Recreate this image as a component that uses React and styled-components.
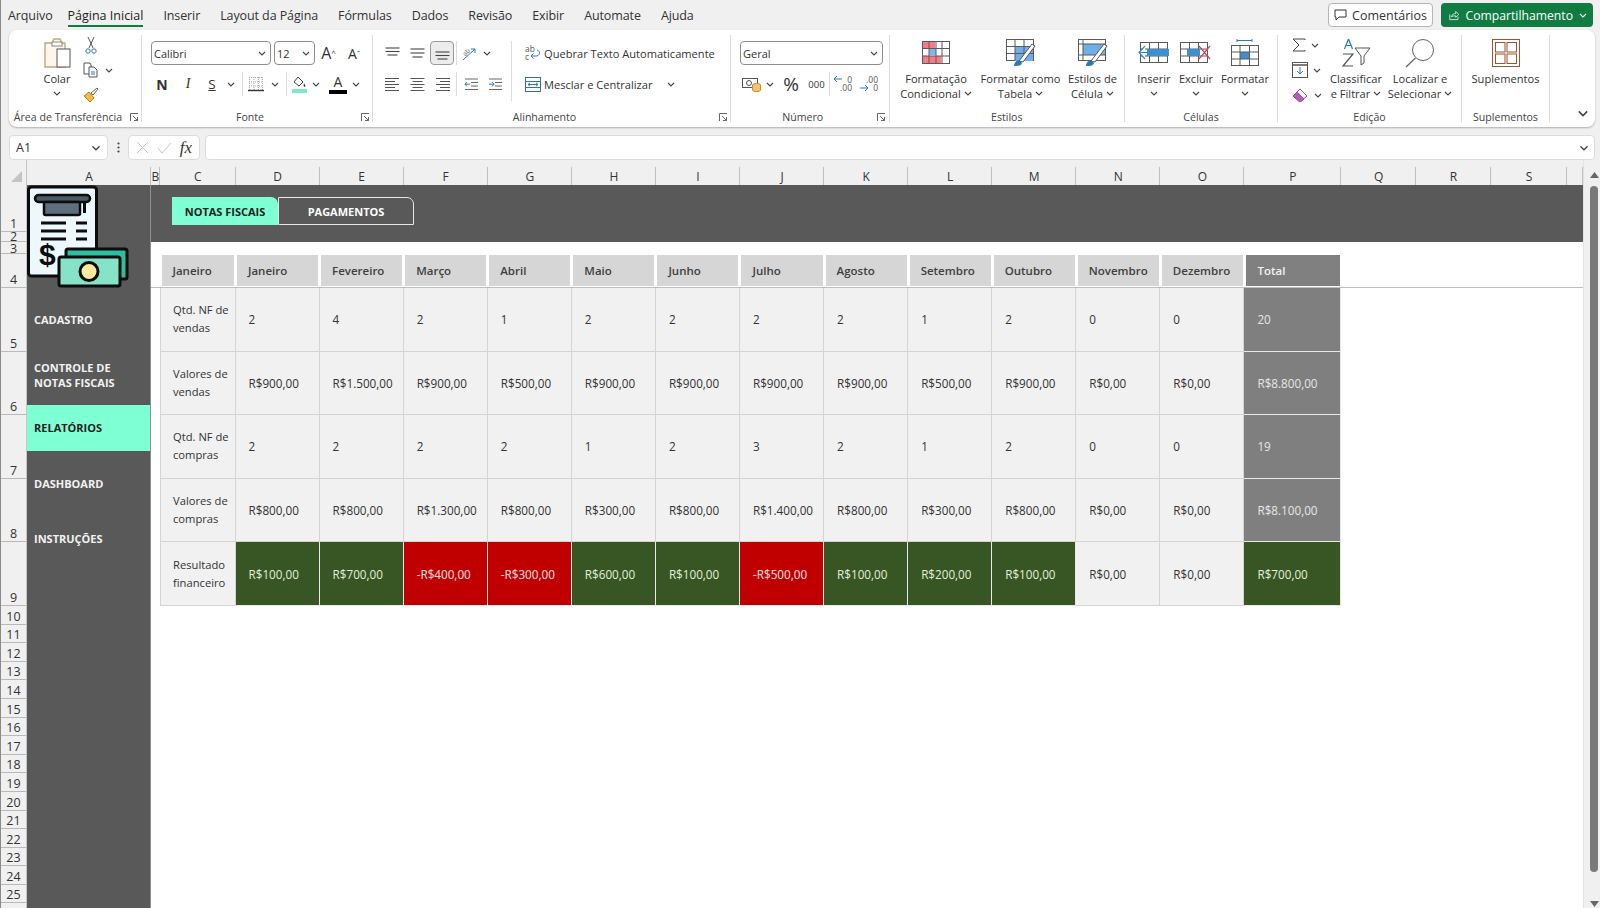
import React from 'react';
import styled, { createGlobalStyle } from 'styled-components';

const Global = createGlobalStyle`
  html, body { margin: 0; padding: 0; height: 100%; overflow: hidden; background: #f0f0f0; }
  body { font-family: "Open Sans", "Liberation Sans", sans-serif; color: #333; }
  * { box-sizing: border-box; }
`;

const Page = styled.div`
  width: 1600px; height: 908px; overflow: hidden; display: flex; flex-direction: column;
  background: #f0f0f0; border-left: 1px solid #8a8a8a;
`;
const TopBar = styled.div`
  height: 30px; display: flex; align-items: center; justify-content: space-between;
  padding: 0 7px 0 7px;
`;
const Menu = styled.nav`display: flex; gap: 20px; align-items: center; height: 30px;`;
const MenuTab = styled.div`
  font-size: 12.5px; letter-spacing: -0.1px; height: 30px; line-height: 31px; position: relative; color: #333;
  ${p => p.$active && `
    color: #222; margin-left: -5px; letter-spacing: 0;
    &::after { content: ""; position: absolute; left: 0; right: 0; bottom: 3px; height: 2px; background: #107c41; }
  `}
`;
const Actions = styled.div`display: flex; gap: 8px; align-items: center;`;
const CommentBtn = styled.button`
  width: 105px; height: 24px; background: #fff; border: 1px solid #b5b5b5; border-radius: 4px; font: inherit;
  font-size: 12.5px; color: #333; display: flex; align-items: center; justify-content: center; gap: 5px; padding: 0;
`;
const ShareBtn = styled.button`
  width: 152px; height: 24px; background: #107c41; border: 0; border-radius: 4px; font: inherit;
  font-size: 12.2px; color: #fff; display: flex; align-items: center; gap: 6px; padding: 0 0 0 8px;
`;
const ShareCaret = styled.span`margin-left: auto; margin-right: 6px; display: flex;`;

const Ribbon = styled.div`
  height: 97px; margin: 0 5px 0 8px; background: #fff; border-radius: 8px;
  box-shadow: 0 1px 2px rgba(0,0,0,.28); display: flex; padding-top: 5px; flex: none;
`;
const Group = styled.section`
  width: ${p => p.$w}px; height: 87px; display: flex; flex-direction: column; flex: none;
  border-right: ${p => (p.$last ? '0' : '1px solid #dcdcdc')};
`;
const GroupBody = styled.div`
  flex: 1; display: flex; padding-left: ${p => p.$pad || 0}px; min-height: 0;
`;
const GroupFoot = styled.div`height: 16px; margin-bottom: -3px; display: flex; align-items: center; flex: none;`;
const GroupLabel = styled.div`flex: 1; text-align: center; font-size: 10.6px; color: #444; white-space: nowrap;`;
const Launcher = styled.span`width: 14px; display: flex; justify-content: center; flex: none;`;

const Stack = styled.div`display: flex; flex-direction: column; gap: 7px; padding-top: 6px; flex: none;`;
const Row = styled.div`display: flex; align-items: center; height: 24px; flex: none;`;
const Tool = styled.span`
  width: ${p => p.$w}px; height: 24px; display: flex; align-items: center; justify-content: center; flex: none;
  color: #333; font-size: ${p => p.$size || 14}px; font-weight: ${p => p.$weight || 400};
  font-style: ${p => p.$italic ? 'italic' : 'normal'};
  text-decoration: ${p => p.$under ? 'underline' : 'none'};
  font-family: ${p => p.$serif ? '"Liberation Serif", serif' : 'inherit'};
  ${p => p.$boxed && 'border: 1px solid #9a9a9a; border-radius: 4px; background: #ececec;'}
`;
const RowSep = styled.span`width: 1px; height: 24px; background: #dcdcdc; margin: 0 ${p => p.$m || 2}px; flex: none;`;
const ColSep = styled.span`width: 1px; height: 60px; margin: 6px 12px 0 ${p => p.$l || 5}px; background: #dcdcdc; flex: none;`;
const Combo = styled.div`
  width: ${p => p.$w}px; height: 24px; border: 1px solid #8e8e8e; border-radius: 4px; background: #fff;
  margin-right: ${p => p.$mr || 0}px; display: flex; align-items: center; justify-content: space-between;
  padding: 0 4px 0 2px; font-size: 11px; color: #333; flex: none;
`;
const TextTool = styled.div`
  display: flex; align-items: center; height: 24px; gap: 3px; font-size: 11.1px; color: #333; white-space: nowrap;
`;
const TextIconSlot = styled.span`width: 17px; display: flex; justify-content: center; flex: none;`;
const CaretGap = styled.span`margin-left: 12px; display: flex;`;

const BigBtn = styled.div`
  width: ${p => p.$w}px; display: flex; flex-direction: column; align-items: center; flex: none;
`;
const BigIcon = styled.div`height: 35.5px; display: flex; align-items: center; justify-content: center; flex: none;`;
const BigText = styled.div`
  font-size: 11.1px; line-height: 15px; color: #333; text-align: center; white-space: nowrap;
  display: flex; align-items: center; justify-content: center; gap: 3px; height: 15px;
`;
const SmallCol = styled.div`
  width: ${p => p.$w}px; flex: none; display: flex; flex-direction: column; gap: 1px; margin-top: -2px;
`;
const SmallRow = styled.div`height: 24px; display: flex; align-items: center; gap: 5px; padding-left: 9px;`;
const RibbonEnd = styled.div`flex: 1; height: 87px; display: flex; align-items: flex-end; justify-content: flex-end; padding: 0 6px 5px 0;`;

const FormulaBar = styled.div`
  height: 25px; margin-top: 8px; padding: 0 5px 0 8px; display: flex; align-items: stretch; flex: none;
`;
const NameBox = styled.div`
  width: 99px; background: #fff; border: 1px solid #dcdcdc; border-radius: 4px; display: flex; align-items: center;
  justify-content: space-between; padding: 0 6px; font-size: 12.5px;
`;
const Dots = styled.div`width: 20px; display: flex; align-items: center; justify-content: center;`;
const FxBox = styled.div`
  width: 72px; background: #fff; border: 1px solid #dcdcdc; border-radius: 4px; display: flex; align-items: center;
  justify-content: space-around; padding: 0 3px;
`;
const FxText = styled.span`font-family: "Liberation Serif", serif; font-style: italic; font-weight: 400; font-size: 17px; color: #333;`;
const Input = styled.div`
  flex: 1; margin-left: 5px; background: #fff; border: 1px solid #dcdcdc; border-radius: 4px;
  display: flex; align-items: center; justify-content: flex-end; padding-right: 5px;
`;

const Sheet = styled.div`
  flex: none; display: grid; background: #fff; height: 748px; overflow: hidden;
  grid-template-columns: 26px 124px 9px 75.5px repeat(12, 84.08px) 97px 74.5px 75px 76px 16px 17px;
  grid-template-rows: 25px 47px 10px 12px 34px repeat(5, 63.6px) repeat(17, 18.6px);
`;
const Corner = styled.div`
  grid-column: 1; grid-row: 1; background: #f0f0f0; display: flex; align-items: flex-end; justify-content: flex-end;
  padding: 0 4px 3px 0; border-right: 1px solid #c6c6c6;
`;
const ColHeader = styled.div`
  grid-row: 1; grid-column: ${p => p.$c}; background: #f0f0f0; font-size: 12px; color: #333;
  display: flex; align-items: flex-end; justify-content: center; position: relative;
  &::after { content: ""; position: absolute; right: 0; top: 7px; bottom: 0; width: 1px; background: #c0c0c0; }
`;
const RowHeader = styled.div`
  grid-column: 1; grid-row: ${p => p.$r}; background: #f0f0f0; border-bottom: 1px solid #b9b9b9; overflow: hidden;
  font-size: 12.5px; line-height: ${p => (p.$tight ? '9px' : '15px')}; color: #333; display: flex; align-items: flex-end; justify-content: center;
  border-right: 1px solid #c6c6c6;
`;
const Banner = styled.div`
  grid-column: 3 / 22; grid-row: 2 / 4; background: #595959; padding: 12px 0 0 21px; display: flex; align-items: flex-start;
`;
const TabNote = styled.div`
  width: 106px; height: 28px; background: #7fffd4; border-top-right-radius: 7px; color: #222; font-size: 11px; font-weight: 700;
  display: flex; align-items: center; justify-content: center;
`;
const TabPay = styled.div`
  width: 136px; height: 28px; background: #595959; border: 1px solid #e6e6e6; border-left: 1px solid #e6e6e6; border-top-right-radius: 7px;
  color: #fff; font-size: 11px; font-weight: 700; display: flex; align-items: center; justify-content: center;
`;
const Sidebar = styled.aside`
  grid-column: 2; grid-row: 2 / 28; background: #595959; display: flex; flex-direction: column; overflow: hidden;
  border-right: 1px solid #8f8f8f;
`;
const NavItem = styled.div`
  height: 46px; margin-top: ${p => p.$top || 0}px; padding-left: 7px; flex: none; display: flex; align-items: center;
  background: ${p => (p.$active ? '#7fffd4' : 'transparent')}; color: ${p => (p.$active ? '#1f1f1f' : '#f2f2f2')};
  font-size: 11px; line-height: 15.5px; font-weight: 700;
`;
const Rule = styled.div`grid-column: 3 / 22; grid-row: 5; border-bottom: 1px solid #bdbdbd;`;
const HeadCell = styled.div`
  grid-row: 5; grid-column: ${p => p.$c}; z-index: 1; margin: 1px ${p => (p.$total ? 1 : 1.5)}px 2px ${p => (p.$total ? 2 : 1.5)}px;
  padding-left: 11px; display: flex; align-items: center; font-size: 11.5px; font-weight: 600;
  background: ${p => (p.$total ? '#808080' : '#d6d6d6')}; color: ${p => (p.$total ? '#f2f2f2' : '#404040')};
`;
const tones = {
  plain: ['#f1f1f1', '#333', '#d4d4d4'],
  total: ['#7f7f7f', '#e6e6e6', '#e8e8e8'],
  good: ['#375623', '#e4eedd', '#e8e8e8'],
  bad: ['#c00000', '#f8e2e2', '#e8e8e8'],
};
const Cell = styled.div`
  grid-row: ${p => p.$r}; grid-column: ${p => p.$c}; padding-left: 13px; display: flex; align-items: center;
  font-size: 11.7px; line-height: 18px; white-space: nowrap;
  background: ${p => tones[p.$tone][0]}; color: ${p => tones[p.$tone][1]};
  border-right: 1px solid ${p => tones[p.$tone][2]}; border-bottom: 1px solid ${p => tones[p.$tone][2]};
  ${p => p.$first && 'border-left: 1px solid #d4d4d4; padding-left: 12px; white-space: normal; font-size: 11.2px;'}
`;
const ScrollBar = styled.div`
  grid-column: 22; grid-row: 1 / 28; background: #f0f0f0; border-left: 1px solid #e3e3e3; display: flex; flex-direction: column;
  align-items: center; padding: 12px 0 0 5px;
`;
const Thumb = styled.div`width: 8px; height: 686px; border-radius: 4px; background: #7a7a7a; margin: 8px 0 29px; flex: none;`;
const SmallMark = styled.sup`font-size: 8px; line-height: 8px;`;

const FontIconWrap = styled.span`
  width: 20px; height: 24px; position: relative; display: flex; justify-content: center; flex: none;
  font-size: 14px; color: #333; line-height: 20px;
`;
const FontBar = styled.span`position: absolute; left: 1px; right: 1px; bottom: 2px; height: 4px; background: #000;`;
const DecWrap = styled.span`
  width: 20px; height: 24px; position: relative; flex: none; font-size: 8.5px; line-height: 8.5px; color: #555;
  display: flex; flex-direction: column; align-items: flex-end; justify-content: center;
`;
const DecArrow = styled.span`position: absolute; left: 0; top: 3px;`;

const C = ({ d = 'M1 1l3 3 3-3', w = 8, h = 5, c = '#444' }) => (
  <svg width={w} height={h} viewBox="0 0 8 5" fill="none"><path d={d} stroke={c} strokeWidth="1.1" /></svg>
);
const S = ({ w, h, children }) => <svg width={w} height={h} viewBox={`0 0 ${w} ${h}`} fill="none">{children}</svg>;

const LaunchIcon = () => (
  <S w={9} h={9}><path d="M.5 8V.5H8M3 3l4.5 4.5M7.5 4v3.5H4" stroke="#666" strokeWidth="1" /></S>
);
const PasteIcon = () => (
  <S w={28} h={31}>
    <path d="M5 6h4l2-4h6l2 4h3v24H2V6z" fill="#fdf6ea" stroke="#c8a478" strokeWidth="1.4" />
    <rect x="9" y="5" width="10" height="4" fill="#fff" stroke="#888" />
    <rect x="14" y="12" width="13" height="18" fill="#fff" stroke="#555" />
  </S>
);
const ScissorsIcon = () => (
  <S w={12} h={18}>
    <path d="M3 1l5 11M9 1L4 12" stroke="#555" />
    <circle cx="3" cy="15" r="2.2" stroke="#2b78b5" /><circle cx="9" cy="15" r="2.2" stroke="#2b78b5" />
  </S>
);
const CopyIcon = () => (
  <S w={15} h={16}>
    <path d="M1 1h6l1 2v9H1z" stroke="#555" fill="#fff" /><path d="M6 5h5l3 3v7H6z" stroke="#555" fill="#fff" />
    <path d="M8 10h4M8 12h4" stroke="#2b78b5" />
  </S>
);
const BrushIcon = () => (
  <S w={16} h={16}>
    <path d="M1 9l5-4 5 6-4 4z" fill="#f4b942" stroke="#b5832a" /><path d="M8 6l6-5 1 1-5 6z" fill="#fff" stroke="#666" />
  </S>
);
const FillIcon = () => (
  <S w={17} h={19}>
    <path d="M7 2l5 5-4 4-5-4z" stroke="#444" fill="#fff" /><path d="M13 8c1 2 2 3 1 4-1 0-2-1-1-4z" fill="#444" />
    <rect x="1" y="14" width="15" height="4" fill="#7fe8c6" />
  </S>
);
const BordersIcon = () => (
  <S w={16} h={16}>
    <path d="M1 1.5h14M1 6h14M1 10h14M1.5 1v13M6 1v13M10.5 1v13M14.5 1v13" stroke="#a9a9a9" strokeDasharray="1 1" />
    <path d="M0 14.5h16" stroke="#333" strokeWidth="1.4" />
  </S>
);
const Lines = ({ ys, ws }) => (
  <S w={15} h={16}>{ys.map((y, i) => <path key={i} d={`M${(15 - ws[i]) / 2} ${y}h${ws[i]}`} stroke="#444" strokeWidth="1.1" />)}</S>
);
const AlignL = ({ n }) => (
  <S w={15} h={15}>{[1.5, 4.5, 7.5, 10.5, 13.5].map((y, i) => {
    const w = i % 2 ? 10 : 14;
    const x = n === 'l' ? 0 : n === 'r' ? 15 - w : (15 - w) / 2;
    return <path key={y} d={`M${x} ${y}h${w}`} stroke="#555" />;
  })}</S>
);
const IndentIcon = ({ rev }) => (
  <S w={15} h={13}>
    {[1, 4.5, 8, 11.5].map((y, i) => <path key={y} d={`M${i === 1 || i === 2 ? 7 : 1} ${y}h${i === 1 || i === 2 ? 7 : 13}`} stroke="#666" />)}
    <path d={rev ? 'M6 6.2H1M3 4L1 6.2l2 2.2' : 'M1 6.2h5M4 4l2 2.2-2 2.2'} stroke="#2b78b5" />
  </S>
);
const OrientIcon = () => (
  <S w={17} h={16}>
    <text x="3" y="10" fontSize="6.5" fontFamily="Open Sans, sans-serif" fill="#555" transform="rotate(-45 6 8)">ab</text>
    <path d="M3 15L15 4M15 4h-4M15 4v4" stroke="#2b78b5" />
  </S>
);
const WrapIcon = () => (
  <S w={17} h={18}>
    <text x="1" y="7.5" fontSize="8.5" fontFamily="Open Sans, sans-serif" fill="#555">ab</text>
    <text x="1" y="15.5" fontSize="8.5" fontFamily="Open Sans, sans-serif" fill="#555">c</text>
    <path d="M13 6c4 1 3 6-1 6H7M9.5 9.5L7 12l2.5 2.5" stroke="#2b78b5" />
  </S>
);
const MergeIcon = () => (
  <S w={16} h={15}>
    <rect x=".5" y=".5" width="15" height="14" fill="#fff" stroke="#3d6f8f" />
    <path d="M.5 4.5h15M.5 10.5h15" stroke="#3d6f8f" />
    <path d="M3 7.5h10M5 5.8L3 7.5l2 1.7M11 5.8l2 1.7-2 1.7" stroke="#2b78b5" />
  </S>
);
const CurrencyIcon = () => (
  <S w={20} h={17}>
    <rect x=".5" y="2.5" width="15" height="9" stroke="#555" fill="#fff" /><circle cx="7" cy="7" r="2.5" stroke="#555" />
    <ellipse cx="14.5" cy="9" rx="4" ry="1.6" fill="#f6c56b" stroke="#c68a2e" />
    <path d="M10.5 9v5c0 2 8 2 8 0V9" fill="#f6c56b" stroke="#c68a2e" />
  </S>
);
const DecArrowIcon = ({ rev }) => (
  <S w={12} h={18}>
    <path d={rev ? 'M10 4H2M5 1L2 4l3 3' : 'M2 13h8M7 10l3 3-3 3'} stroke="#2b78b5" />
  </S>
);
const CondIcon = () => (
  <S w={28} h={24}>
    <rect x=".5" y=".5" width="27" height="22" fill="#fff" stroke="#5a5a5a" />
    <rect x="1" y="1" width="12" height="6" fill="#f77a86" /><rect x="1" y="15" width="18" height="7" fill="#f77a86" />
    <rect x="7" y="8" width="7" height="6" fill="#7cb8ef" />
    <path d="M7 .5v22M14 .5v22M20 .5v22M.5 7.5h27M.5 15h27" stroke="#5a5a5a" />
  </S>
);
const TableIcon = () => (
  <S w={30} h={28}>
    <rect x=".5" y=".5" width="27" height="21" fill="#fff" stroke="#5a5a5a" />
    <rect x="9" y="7" width="18" height="15" fill="#70aeeb" />
    <path d="M9 .5v21M18 .5v21M.5 7.5h27M.5 14.5h27" stroke="#5a5a5a" />
    <path d="M13 22l13-17 3 2-12 16z" fill="#fff" stroke="#555" />
    <path d="M8 27c0-4 4-7 6-5l2 2c-1 3-4 3-8 3z" fill="#2b78b5" />
  </S>
);
const StyleIcon = () => (
  <S w={30} h={28}>
    <rect x=".5" y=".5" width="27" height="21" fill="#fff" stroke="#5a5a5a" />
    <rect x="5" y="5" width="22" height="11" fill="#70aeeb" />
    <path d="M5 .5v21M.5 5h27M.5 16h27" stroke="#5a5a5a" />
    <path d="M13 22l13-17 3 2-12 16z" fill="#fff" stroke="#555" />
    <path d="M8 27c0-4 4-7 6-5l2 2c-1 3-4 3-8 3z" fill="#2b78b5" />
  </S>
);
const InsertIcon = () => (
  <S w={32} h={24}>
    <rect x="2.5" y="1.5" width="27" height="20" fill="#fff" stroke="#5a5a5a" />
    <path d="M11.5 1.5v20M20.5 1.5v20M2.5 8h27M2.5 15h27" stroke="#5a5a5a" />
    <rect x="9" y="8" width="22" height="7" fill="#3e8ed0" />
    <path d="M14 11.5H1M7 5l-6 6.5L7 18" stroke="#2b8bd0" strokeWidth="1.2" fill="#fff" />
  </S>
);
const DeleteIcon = () => (
  <S w={32} h={24}>
    <rect x=".5" y="1.5" width="27" height="20" fill="#fff" stroke="#5a5a5a" />
    <path d="M9.5 1.5v20M18.5 1.5v20M.5 8h27M.5 15h27" stroke="#5a5a5a" />
    <rect x="7" y="8" width="13" height="7" fill="#3e8ed0" />
    <path d="M19 5l11 13M30 5L19 18" stroke="#e0424b" strokeWidth="1.2" />
  </S>
);
const FormatIcon = () => (
  <S w={28} h={28}>
    <path d="M6 1.5h15M6 0v3M21 0v3" stroke="#2b78b5" />
    <rect x=".5" y="6.5" width="27" height="20" fill="#fff" stroke="#5a5a5a" />
    <rect x="9" y="13" width="10" height="7" fill="#3e8ed0" />
    <path d="M9 6.5v20M18.5 6.5v20M.5 13h27M.5 20h27" stroke="#5a5a5a" />
  </S>
);
const SigmaIcon = () => <S w={14} h={14}><path d="M13 2V1H1l6 6-6 6h12v-1" stroke="#444" /></S>;
const FillDownIcon = () => (
  <S w={16} h={16}>
    <rect x=".5" y=".5" width="15" height="15" fill="#fff" stroke="#555" />
    <path d="M.5 3h15" stroke="#555" strokeWidth="1.5" />
    <path d="M8 5v7M5 9l3 3 3-3" stroke="#2b78b5" />
  </S>
);
const EraserIcon = () => (
  <S w={17} h={15}>
    <path d="M1 8l7-7 7 7-7 6z" fill="#fff" stroke="#a64aa8" /><path d="M1 8l4-4 7 7-4 3z" fill="#b85ab8" stroke="#a64aa8" />
  </S>
);
const SortIcon = () => (
  <S w={30} h={29}>
    <path d="M7.5 1l-4 10M7.5 1l4 10M5 7.5h5" stroke="#2b78b5" strokeWidth="1.2" />
    <path d="M2 16h10L2 28h10" stroke="#555" strokeWidth="1.2" />
    <path d="M14 10h15l-6 8v7l-3 2v-9z" stroke="#555" fill="#fff" />
  </S>
);
const FindIcon = () => (
  <S w={30} h={30}>
    <circle cx="18" cy="12" r="10.5" stroke="#666" fill="#fff" />
    <path d="M10.5 20L1 29" stroke="#666" strokeWidth="1.2" />
  </S>
);
const AddInIcon = () => (
  <S w={28} h={28}>
    <rect x=".5" y=".5" width="27" height="27" fill="#fff" stroke="#a0522d" />
    <rect x="3.5" y="3.5" width="9.5" height="9.5" stroke="#a0522d" /><rect x="15" y="3.5" width="9.5" height="9.5" stroke="#a0522d" />
    <rect x="3.5" y="15" width="9.5" height="9.5" stroke="#a0522d" /><rect x="15" y="15" width="9.5" height="9.5" stroke="#a0522d" />
  </S>
);
const CommentIcon = () => <S w={13} h={12}><path d="M1 1h11v7H5l-3 3V8H1z" stroke="#333" /></S>;
const ShareIcon = () => (
  <S w={14} h={13}><path d="M1 5v7h11V8M3 8c1-3 4-4 6-4V1l4 4-4 4V7C7 7 5 7 3 8z" stroke="#fff" /></S>
);
const Logo = () => (
  <svg width="103" height="103" viewBox="27 185 103 103" fill="none" style={{ display: 'block', flex: 'none' }}>
    <rect x="28.5" y="187" width="68" height="89" rx="3" fill="#edf8fd" stroke="#0c0c0c" strokeWidth="3" />
    <rect x="35" y="195" width="55" height="7" rx="3.5" fill="#4a5a66" stroke="#0c0c0c" strokeWidth="2.5" />
    <rect x="44" y="202" width="36" height="13" rx="1.5" fill="#5d6f7c" stroke="#0c0c0c" strokeWidth="2.5" />
    <path d="M84.5 202v11M41 223h25M41 231h25M41 239h25M76 223h11M76 231h11M76 239h11" stroke="#0c0c0c" strokeWidth="3" />
    <text x="39" y="265" fontFamily="Liberation Sans, sans-serif" fontWeight="700" fontSize="30" fill="#0c0c0c">$</text>
    <rect x="66" y="249" width="61" height="30" rx="2" fill="#2dbf9f" stroke="#0c0c0c" strokeWidth="3" />
    <rect x="59" y="257" width="61" height="29" rx="2" fill="#86e3c7" stroke="#0c0c0c" strokeWidth="3" />
    <circle cx="89" cy="271.5" r="9" fill="#ffe9a0" stroke="#0c0c0c" strokeWidth="3" />
  </svg>
);

function FontTool() {
  return <FontIconWrap>A<FontBar /></FontIconWrap>;
}
function DecTool({ rev }) {
  return (
    <DecWrap>
      <span>{rev ? '0' : '.00'}</span>
      <span>{rev ? '.00' : '0'}</span>
      <DecArrow><DecArrowIcon rev={rev} /></DecArrow>
    </DecWrap>
  );
}

const colLetters = ['A','B','C','D','E','F','G','H','I','J','K','L','M','N','O','P','Q','R','S'];
const rowNums = Array.from({ length: 25 }, (_, i) => i + 1);
const months = ['Janeiro','Janeiro','Fevereiro','Março','Abril','Maio','Junho','Julho','Agosto','Setembro','Outubro','Novembro','Dezembro'];
const money = v => `R$${v}`;
const table = [
  { label: 'Qtd. NF de vendas', vals: ['2','4','2','1','2','2','2','2','1','2','0','0'], total: '20' },
  { label: 'Valores de vendas', vals: ['900,00','1.500,00','900,00','500,00','900,00','900,00','900,00','900,00','500,00','900,00','0,00','0,00'].map(money), total: 'R$8.800,00' },
  { label: 'Qtd. NF de compras', vals: ['2','2','2','2','1','2','3','2','1','2','0','0'], total: '19' },
  { label: 'Valores de compras', vals: ['800,00','800,00','1.300,00','800,00','300,00','800,00','1.400,00','800,00','300,00','800,00','0,00','0,00'].map(money), total: 'R$8.100,00' },
];
const result = [
  ['R$100,00','good'],['R$700,00','good'],['-R$400,00','bad'],['-R$300,00','bad'],['R$600,00','good'],['R$100,00','good'],
  ['-R$500,00','bad'],['R$100,00','good'],['R$200,00','good'],['R$100,00','good'],['R$0,00','plain'],['R$0,00','plain'],
];
const menu = ['Arquivo','Página Inicial','Inserir','Layout da Página','Fórmulas','Dados','Revisão','Exibir','Automate','Ajuda'];

export default function App() {
  return (
    <Page>
      <Global />
      <TopBar>
        <Menu>{menu.map(m => <MenuTab key={m} $active={m === 'Página Inicial'}>{m}</MenuTab>)}</Menu>
        <Actions>
          <CommentBtn><CommentIcon />Comentários</CommentBtn>
          <ShareBtn><ShareIcon />Compartilhamento<ShareCaret><C c="#fff" /></ShareCaret></ShareBtn>
        </Actions>
      </TopBar>

      <Ribbon>
        <Group $w={133}>
          <GroupBody $pad={33}>
            <BigBtn $w={30}>
              <BigIcon><PasteIcon /></BigIcon>
              <BigText>Colar</BigText>
              <BigText><C /></BigText>
            </BigBtn>
            <SmallCol $w={46}>
              <Row><Tool $w={38}><ScissorsIcon /></Tool></Row>
              <Row><Tool $w={8} /><Tool $w={20}><CopyIcon /></Tool><Tool $w={18}><C /></Tool></Row>
              <Row><Tool $w={38}><BrushIcon /></Tool></Row>
            </SmallCol>
          </GroupBody>
          <GroupFoot><GroupLabel>Área de Transferência</GroupLabel><Launcher><LaunchIcon /></Launcher></GroupFoot>
        </Group>

        <Group $w={231}>
          <GroupBody $pad={9}>
            <Stack>
              <Row>
                <Combo $w={120} $mr={3}>Calibri<C /></Combo>
                <Combo $w={41}>12<C /></Combo>
                <Tool $w={27} $size={16}>A<SmallMark>^</SmallMark></Tool>
                <Tool $w={24} $size={14}>A<SmallMark>ˇ</SmallMark></Tool>
              </Row>
              <Row>
                <Tool $w={22} $weight={700} $size={14}>N</Tool>
                <Tool $w={4} />
                <Tool $w={22} $italic $serif $size={14}>I</Tool>
                <Tool $w={2} />
                <Tool $w={22} $under $size={13.5}>S</Tool>
                <Tool $w={16}><C /></Tool>
                <RowSep $m={3} />
                <Tool $w={20}><BordersIcon /></Tool>
                <Tool $w={18}><C /></Tool>
                <RowSep $m={2} />
                <Tool $w={20}><FillIcon /></Tool>
                <Tool $w={14}><C /></Tool>
                <Tool $w={5} />
                <FontTool />
                <Tool $w={15}><C /></Tool>
              </Row>
            </Stack>
          </GroupBody>
          <GroupFoot><GroupLabel>Fonte</GroupLabel><Launcher><LaunchIcon /></Launcher></GroupFoot>
        </Group>

        <Group $w={358}>
          <GroupBody $pad={7}>
            <Stack>
              <Row>
                <Tool $w={25}><Lines ys={[3, 6.5, 10]} ws={[14, 14, 10]} /></Tool>
                <Tool $w={25}><Lines ys={[4, 8, 12]} ws={[14, 14, 10]} /></Tool>
                <Tool $w={24} $boxed><Lines ys={[7, 10.5, 14]} ws={[14, 14, 10]} /></Tool>
                <RowSep $m={2} />
                <Tool $w={19}><OrientIcon /></Tool>
                <Tool $w={17}><C /></Tool>
              </Row>
              <Row>
                <Tool $w={25}><AlignL n="l" /></Tool>
                <Tool $w={25}><AlignL n="c" /></Tool>
                <Tool $w={24}><AlignL n="r" /></Tool>
                <RowSep $m={2} />
                <Tool $w={24}><IndentIcon rev /></Tool>
                <Tool $w={25}><IndentIcon /></Tool>
              </Row>
            </Stack>
            <ColSep $l={3} />
            <Stack>
              <TextTool><TextIconSlot><WrapIcon /></TextIconSlot>Quebrar Texto Automaticamente</TextTool>
              <TextTool><TextIconSlot><MergeIcon /></TextIconSlot>Mesclar e Centralizar<CaretGap><C /></CaretGap></TextTool>
            </Stack>
          </GroupBody>
          <GroupFoot><GroupLabel>Alinhamento</GroupLabel><Launcher><LaunchIcon /></Launcher></GroupFoot>
        </Group>

        <Group $w={158.5}>
          <GroupBody $pad={9}>
            <Stack>
              <Row><Combo $w={143}>Geral<C /></Combo></Row>
              <Row>
                <Tool $w={24}><CurrencyIcon /></Tool>
                <Tool $w={12}><C /></Tool>
                <Tool $w={30} $size={19}>%</Tool>
                <Tool $w={21} $size={9.5}>000</Tool>
                <RowSep $m={2} />
                <DecTool rev />
                <Tool $w={6} />
                <DecTool />
              </Row>
            </Stack>
          </GroupBody>
          <GroupFoot><GroupLabel>Número</GroupLabel><Launcher><LaunchIcon /></Launcher></GroupFoot>
        </Group>

        <Group $w={235.5}>
          <GroupBody $pad={3}>
            <BigBtn $w={87}><BigIcon><CondIcon /></BigIcon><BigText>Formatação</BigText><BigText>Condicional <C /></BigText></BigBtn>
            <BigBtn $w={82}><BigIcon><TableIcon /></BigIcon><BigText>Formatar como</BigText><BigText>Tabela <C /></BigText></BigBtn>
            <BigBtn $w={62}><BigIcon><StyleIcon /></BigIcon><BigText>Estilos de</BigText><BigText>Célula <C /></BigText></BigBtn>
          </GroupBody>
          <GroupFoot><GroupLabel>Estilos</GroupLabel></GroupFoot>
        </Group>

        <Group $w={153}>
          <GroupBody $pad={7}>
            <BigBtn $w={44}><BigIcon><InsertIcon /></BigIcon><BigText>Inserir</BigText><BigText><C /></BigText></BigBtn>
            <BigBtn $w={40}><BigIcon><DeleteIcon /></BigIcon><BigText>Excluir</BigText><BigText><C /></BigText></BigBtn>
            <BigBtn $w={58}><BigIcon><FormatIcon /></BigIcon><BigText>Formatar</BigText><BigText><C /></BigText></BigBtn>
          </GroupBody>
          <GroupFoot><GroupLabel>Células</GroupLabel></GroupFoot>
        </Group>

        <Group $w={184}>
          <GroupBody $pad={5}>
            <SmallCol $w={42}>
              <SmallRow><SigmaIcon /><C /></SmallRow>
              <SmallRow><FillDownIcon /><C /></SmallRow>
              <SmallRow><EraserIcon /><C /></SmallRow>
            </SmallCol>
            <BigBtn $w={62}><BigIcon><SortIcon /></BigIcon><BigText>Classificar</BigText><BigText>e Filtrar <C /></BigText></BigBtn>
            <BigBtn $w={66}><BigIcon><FindIcon /></BigIcon><BigText>Localizar e</BigText><BigText>Selecionar <C /></BigText></BigBtn>
          </GroupBody>
          <GroupFoot><GroupLabel>Edição</GroupLabel></GroupFoot>
        </Group>

        <Group $w={88}>
          <GroupBody>
            <BigBtn $w={87}><BigIcon><AddInIcon /></BigIcon><BigText>Suplementos</BigText></BigBtn>
          </GroupBody>
          <GroupFoot><GroupLabel>Suplementos</GroupLabel></GroupFoot>
        </Group>
        <RibbonEnd><C w={12} h={7} /></RibbonEnd>
      </Ribbon>

      <FormulaBar>
        <NameBox>A1<C w={10} h={6} /></NameBox>
        <Dots><S w={3} h={11}><circle cx="1.5" cy="1.5" r="1.1" fill="#444" /><circle cx="1.5" cy="5.5" r="1.1" fill="#444" /><circle cx="1.5" cy="9.5" r="1.1" fill="#444" /></S></Dots>
        <FxBox>
          <S w={13} h={13}><path d="M1 1l11 11M12 1L1 12" stroke="#c6c6c6" /></S>
          <S w={15} h={12}><path d="M1 6l4 5 9-10" stroke="#c6c6c6" /></S>
          <FxText>fx</FxText>
        </FxBox>
        <Input><C w={10} h={6} /></Input>
      </FormulaBar>

      <Sheet>
        <Corner><S w={11} h={11}><path d="M11 0v11H0z" fill="#c4c4c4" /></S></Corner>
        {colLetters.map((l, i) => <ColHeader key={l} $c={i + 2}>{l}</ColHeader>)}
        <ColHeader $c={21} />
        {rowNums.map(n => <RowHeader key={n} $r={n + 1} $tight={n === 2 || n === 3}>{n}</RowHeader>)}
        <RowHeader $r={27} />

        <Banner><TabNote>NOTAS FISCAIS</TabNote><TabPay>PAGAMENTOS</TabPay></Banner>

        <Sidebar>
          <Logo />
          <NavItem $top={9}>CADASTRO</NavItem>
          <NavItem $top={9}>CONTROLE DE<br />NOTAS FISCAIS</NavItem>
          <NavItem $top={7} $active>RELATÓRIOS</NavItem>
          <NavItem $top={10}>DASHBOARD</NavItem>
          <NavItem $top={9}>INSTRUÇÕES</NavItem>
        </Sidebar>

        <Rule />
        {months.map((m, i) => <HeadCell key={i} $c={i + 4}>{m}</HeadCell>)}
        <HeadCell $c={17} $total>Total</HeadCell>

        {table.map((row, r) => (
          <React.Fragment key={row.label}>
            <Cell $r={r + 6} $c={4} $tone="plain" $first>{row.label}</Cell>
            {row.vals.map((v, i) => <Cell key={i} $r={r + 6} $c={i + 5} $tone="plain">{v}</Cell>)}
            <Cell $r={r + 6} $c={17} $tone="total">{row.total}</Cell>
          </React.Fragment>
        ))}
        <Cell $r={10} $c={4} $tone="plain" $first>Resultado financeiro</Cell>
        {result.map(([v, t], i) => <Cell key={i} $r={10} $c={i + 5} $tone={t}>{v}</Cell>)}
        <Cell $r={10} $c={17} $tone="good">R$700,00</Cell>

        <ScrollBar>
          <S w={9} h={6}><path d="M4.5 0L9 6H0z" fill="#666" /></S>
          <Thumb />
          <S w={9} h={6}><path d="M4.5 6L9 0H0z" fill="#666" /></S>
        </ScrollBar>
      </Sheet>
    </Page>
  );
}
